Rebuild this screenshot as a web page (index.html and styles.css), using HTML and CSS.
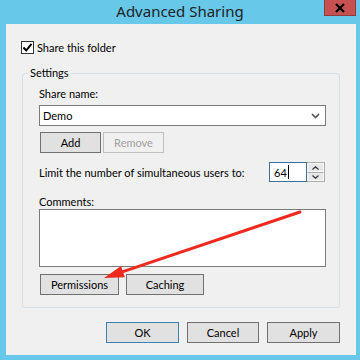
FILE: index.html
```html
<!DOCTYPE html>
<html lang="en">
<head>
  <meta charset="UTF-8" />
  <title>Advanced Sharing</title>
  <link rel="stylesheet" href="styles.css">
</head>
<body>

<div class="window">
  <div class="titlebar">
    <div></div>
    <div class="title">Advanced Sharing</div>
    <button class="close">
      <svg width="12" height="10" viewBox="0 0 12 10">
        <path d="M2 1 L10 9 M10 1 L2 9" stroke="#000" stroke-width="2.2" fill="none" />
      </svg>
    </button>
  </div>

  <div class="client">
    <label class="check-row">
      <span class="checkbox">
        <svg width="11" height="11" viewBox="0 0 11 11">
          <path d="M1.5 5.5 L4.2 8.5 L9.5 1.8" stroke="#000" stroke-width="2" fill="none" />
        </svg>
      </span>
      Share this folder
    </label>

    <fieldset class="group">
      <legend>Settings</legend>
      <div class="group-body">
        <div class="field-label">Share name:</div>
        <div class="select">
          <span>Demo</span>
          <svg width="9" height="6" viewBox="0 0 9 6">
            <path d="M1 1 L4.5 4.5 L8 1" stroke="#555" stroke-width="1.6" fill="none" />
          </svg>
        </div>

        <div class="btn-row">
          <button class="btn">Add</button>
          <button class="btn disabled">Remove</button>
        </div>

        <div class="limit-row">
          <span>Limit the number of simultaneous users to:</span>
          <div class="spin">
            <div class="spin-input">64<span class="caret"></span></div>
            <div class="spin-btns">
              <div class="spin-btn">
                <svg width="7" height="4" viewBox="0 0 7 4"><path d="M0.5 3.5 L3.5 0.8 L6.5 3.5" stroke="#333" stroke-width="1.2" fill="none" /></svg>
              </div>
              <div class="spin-btn">
                <svg width="7" height="4" viewBox="0 0 7 4"><path d="M0.5 0.5 L3.5 3.2 L6.5 0.5" stroke="#333" stroke-width="1.2" fill="none" /></svg>
              </div>
            </div>
          </div>
        </div>

        <div class="field-label comments">Comments:</div>
        <div class="textarea"></div>

        <div class="btn-row wide">
          <button class="btn perm">Permissions</button>
          <button class="btn cache">Caching</button>
        </div>
      </div>
    </fieldset>

    <div class="dialog-buttons">
      <button class="btn dlg default">OK</button>
      <button class="btn dlg cancel">Cancel</button>
      <button class="btn dlg">Apply</button>
    </div>
  </div>

  <!-- red annotation arrow drawn over the dialog -->
  <svg class="annotation" width="360" height="360" viewBox="0 0 360 360">
    <line x1="300" y1="212" x2="120" y2="272.7" stroke="#ee2a1f" stroke-width="3" stroke-linecap="round" />
    <polygon points="104,278 124.9,277.3 121,265.9" fill="#ee2a1f" />
  </svg>
</div>

</body>
</html>
```

FILE: styles.css
```css
* {
  box-sizing: border-box;
}

html, body {
  margin: 0;
  padding: 0;
}

body {
  width: 360px;
  height: 360px;
  overflow: hidden;
  background: #67c8ea;
  font-family: 'Lato', sans-serif;
  font-size: 11px;
  color: #000;
}

.window {
  position: relative;
  height: 360px;
}

.titlebar {
  display: grid;
  grid-template-columns: 1fr auto 1fr;
  height: 24px;
}

.title {
  font-family: 'Noto Sans', sans-serif;
  font-size: 15px;
  line-height: 22px;
  color: #222;
}

.close {
  justify-self: end;
  align-self: start;
  margin-right: 4px;
  width: 32px;
  height: 16px;
  padding: 0;
  background: #c75050;
  border: 1px solid #8f3b3b;
  border-top: none;
  display: flex;
  align-items: center;
  justify-content: center;
}

.client {
  margin: 0 4px 0 6px;
  height: 331px;
  background: #f0f0f0;
  padding: 17px 16px 0 16px;
}

.check-row {
  display: flex;
  align-items: center;
  gap: 3px;
  height: 13px;
  margin-left: -1px;
}

.checkbox {
  width: 13px;
  height: 13px;
  border: 1px solid #333;
  background: #fff;
  display: flex;
  align-items: center;
  justify-content: center;
}

.group {
  margin: 12px 0 0;
  padding: 0;
  min-width: 0;
  border: 1px solid #d5dfe5;
  border-radius: 3px;
}

.group legend {
  margin-left: 5px;
  padding: 0 2px;
  line-height: 14px;
}

.group-body {
  padding: 6px 13px 12px 16px;
}

.field-label {
  line-height: 15px;
}

.select {
  margin-top: 4px;
  height: 21px;
  border: 1px solid #7a7a7a;
  background: #fff;
  display: flex;
  align-items: center;
  justify-content: space-between;
  padding: 0 5px 0 3px;
}

.btn-row {
  display: flex;
  gap: 2px;
  margin-top: 6px;
  padding-left: 1px;
}

.btn {
  height: 21px;
  padding: 0;
  font-family: inherit;
  font-size: 11px;
  color: #000;
  background: #e1e1e1;
  border: 1px solid #707070;
}

.btn-row .btn {
  width: 61px;
}

.btn.disabled {
  background: #f0f0f0;
  border-color: #bfbfbf;
  color: #a0a0a0;
}

.limit-row {
  display: flex;
  align-items: center;
  margin-top: 9px;
  white-space: nowrap;
}

.spin {
  margin-left: auto;
  margin-right: 1px;
  display: flex;
  height: 20px;
}

.spin-input {
  width: 38px;
  border: 1px solid #3c6e96;
  background: #fff;
  display: flex;
  align-items: center;
  padding-left: 4px;
}

.caret {
  width: 1px;
  height: 14px;
  background: #000;
  margin-left: 1px;
}

.spin-btns {
  width: 18px;
  display: flex;
  flex-direction: column;
  border: 1px solid #adadad;
  border-left: none;
}

.spin-btn {
  flex: 1;
  display: flex;
  align-items: center;
  justify-content: center;
  background: #e8e8e8;
  border: 1px solid #f8f8f8;
}

.spin-btn + .spin-btn {
  border-top: 1px solid #adadad;
}

.comments {
  margin-top: 12px;
}

.textarea {
  height: 58px;
  border: 1px solid #7a7a7a;
  background: #fff;
}

.btn-row.wide {
  gap: 7px;
  margin-top: 7px;
}

.btn-row .perm {
  width: 79px;
}

.btn-row .cache {
  width: 78px;
}

.dialog-buttons {
  display: flex;
  justify-content: flex-end;
  gap: 8px;
  margin-top: 14px;
}

.dlg {
  width: 73px;
}

.dlg.cancel {
  width: 72px;
}

.dlg.default {
  border-color: #3c7fb1;
}

.annotation {
  position: absolute;
  top: 0;
  left: 0;
  pointer-events: none;
}
```
